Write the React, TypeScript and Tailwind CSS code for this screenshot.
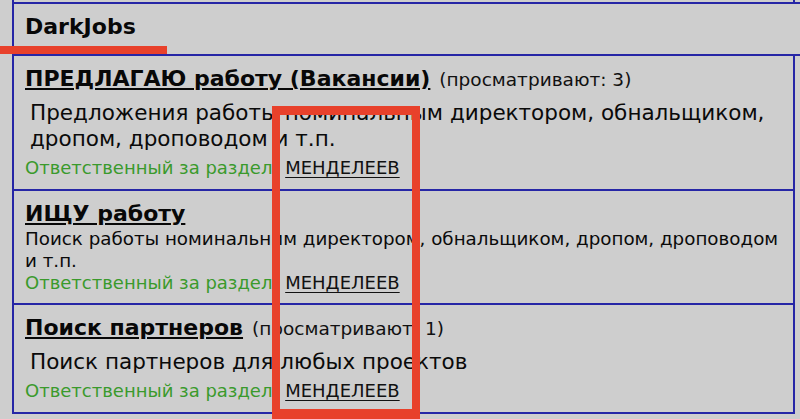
import React from 'react';

type Section = {
  title: string;
  views?: number;
  desc: string;
  bigDesc: boolean;
};

const sections: Section[] = [
  {
    title: 'ПРЕДЛАГАЮ работу (Вакансии)',
    views: 3,
    desc: 'Предложения работы номинальным директором, обнальщиком, дропом, дроповодом и т.п.',
    bigDesc: true,
  },
  {
    title: 'ИЩУ работу',
    desc: 'Поиск работы номинальним директором, обнальщиком, дропом, дроповодом и т.п.',
    bigDesc: false,
  },
  {
    title: 'Поиск партнеров',
    views: 1,
    desc: 'Поиск партнеров для любых проектов',
    bigDesc: true,
  },
];

const SectionRow: React.FC<{ s: Section }> = ({ s }) => (
  <div
    className={`w-[781px] border-r-2 border-b-2 border-[#2626a6] pl-[11px] pr-[3px] pt-[10px] ${
      s.bigDesc ? 'pb-[10px]' : 'pb-[9px]'
    }`}
  >
    <div className="text-[22px] leading-[26px] whitespace-nowrap">
      <a href="#" className="font-bold text-[#080808] underline decoration-2 underline-offset-[2px]">
        {s.title}
      </a>
      {s.views !== undefined && (
        <span className="ml-[3px] text-[18.5px] text-[#111]"> (просматривают: {s.views})</span>
      )}
    </div>
    {s.bigDesc ? (
      <div className="pl-[5px] pr-[9px] text-[21.5px] leading-[26px] text-[#0a0a0a] mt-[7px]">{s.desc}</div>
    ) : (
      <div className="text-[18.3px] leading-[22px] text-[#0a0a0a] mt-[1px]">{s.desc}</div>
    )}
    <div className={`text-[18px] leading-[22px] ${s.bigDesc ? 'mt-[5px]' : ''}`}>
      <span className="text-[#3a9a2c]">Ответственный за раздел</span>{' '}
      <a href="#" className="ml-[7px] text-[#111] underline underline-offset-[3px]">МЕНДЕЛЕЕВ</a>
    </div>
  </div>
);

export default function App() {
  return (
    <div
      className="relative w-[800px] h-[419px] overflow-hidden bg-[#cecece]"
      style={{ fontFamily: '"DejaVu Sans", Verdana, sans-serif' }}
    >
      <div className="ml-3 border-l-2 border-[#2626a6]">
        <div className="h-[2px] w-[781px] border-r-2 border-[#2626a6]" />
        <div className="h-[54px] border-t-2 border-b-2 border-[#2626a6] pl-[11px] pt-[12px]">
          <div className="text-[22px] font-bold leading-[22px] text-[#080808]">DarkJobs</div>
        </div>
        {sections.map(s => (
          <SectionRow key={s.title} s={s} />
        ))}
      </div>

      {/* red annotations */}
      <div className="absolute left-0 top-[46px] w-[167px] h-[8px] bg-[#e8412b]" />
      <div className="absolute left-[272px] top-[106px] w-[148px] h-[313px] border-[8px] border-t-[9px] border-b-[10px] border-[#e8412b]" />
    </div>
  );
}
